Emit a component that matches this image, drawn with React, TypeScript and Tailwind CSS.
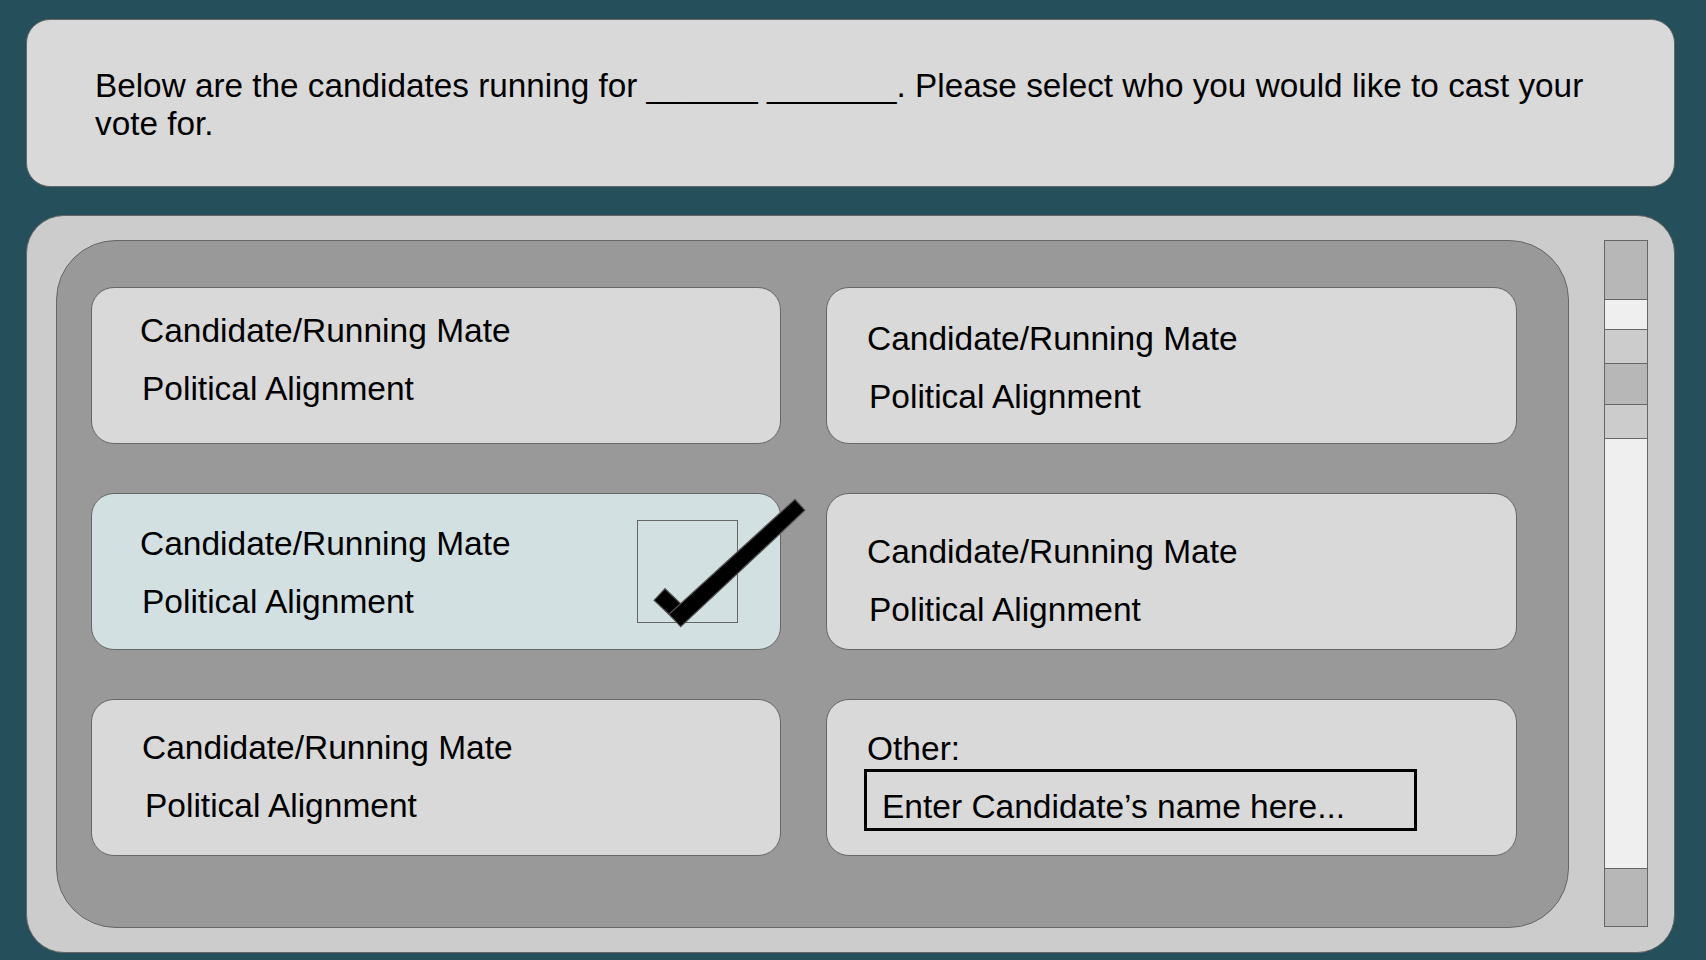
import React from 'react';

type CardProps = {
	top: number;
	left: number;
	shift: number;
	selected?: boolean;
};

const padTop: Record<number, string> = {
	14: 'pt-[14px]',
	21: 'pt-[21px]',
	22: 'pt-[22px]',
	19: 'pt-[19px]',
	29: 'pt-[29px]',
};

const padLeft: Record<number, string> = {
	40: 'pl-[40px]',
	48: 'pl-[48px]',
	50: 'pl-[50px]',
};

const shiftLeft: Record<number, string> = {
	2: 'ml-[2px]',
	3: 'ml-[3px]',
};

function Checkbox() {
	return (
		<div className="relative mr-[42px] h-[103px] w-[101px] shrink-0 border-[1.5px] border-[#666666]">
			{/* check runs past the card edge, so it sits on top */}
			<svg
				className="pointer-events-none absolute left-[-40px] top-[-30px] overflow-visible"
				width="170"
				height="150"
				viewBox="0 0 170 150"
			>
				<g transform="translate(-506.6 2.7)">
					<polygon
						points="562.6,106.6 573.6,95 592.3,112.8 581.3,124.3"
						fill="#000"
						stroke="#555"
						strokeWidth="1.2"
					/>
					<polygon
						points="703.6,5.6 713.6,16.6 589.3,133 577.6,120.6"
						fill="#000"
						stroke="#555"
						strokeWidth="1.2"
					/>
				</g>
			</svg>
		</div>
	);
}

function CandidateCard({ top, left, shift, selected }: CardProps) {
	return (
		<div
			className={`flex h-[157px] items-center justify-between rounded-[23px] border border-[#666666] ${
				selected ? 'bg-[#d3e0e2]' : 'bg-[#d9d9d9]'
			}`}
		>
			<div className={`self-start text-[33.5px] leading-[58px] ${padTop[top]} ${padLeft[left]}`}>
				<p>Candidate/Running Mate</p>
				<p className={shiftLeft[shift]}>Political Alignment</p>
			</div>
			{selected && <Checkbox />}
		</div>
	);
}

function OtherCard() {
	return (
		<div className="h-[157px] rounded-[23px] border border-[#666666] bg-[#d9d9d9] pl-[37px] pt-[30px]">
			<p className="pl-[3px] text-[33.5px] leading-[37px]">Other:</p>
			<div className="mt-[2px] h-[62px] w-[553px] border-[3px] border-black pl-[15px] pt-[16px] text-[33.5px] leading-[37px]">
				Enter Candidate’s name here...
			</div>
		</div>
	);
}

function Scrollbar() {
	return (
		<div className="flex h-full w-[44px] flex-col border border-[#666666] bg-[#efefef]">
			<div className="h-[58px] bg-[#b7b7b7]" />
			<div className="h-[30px] border-t border-[#666666] bg-[#efefef]" />
			<div className="h-[34px] border-t border-[#666666] bg-[#cccccc]" />
			<div className="h-[41px] border-t border-[#666666] bg-[#b7b7b7]" />
			<div className="h-[34px] border-t border-[#666666] bg-[#cccccc]" />
			<div className="flex-1 border-t border-[#666666] bg-[#efefef]" />
			<div className="h-[58px] border-t border-[#666666] bg-[#b7b7b7]" />
		</div>
	);
}

export default function App() {
	return (
		<div className="min-h-screen w-full bg-[#264f5c] pl-[26px] pt-[19px] font-['Liberation_Sans',Arial,sans-serif] text-black">
			<div className="h-[168px] w-[1649px] rounded-[24px] border border-[#666666] bg-[#d9d9d9] pl-[68px] pr-[50px] pt-[47px] text-[33.3px] leading-[38px]">
				Below are the candidates running for ______ _______. Please select who you would like to
				cast your vote for.
			</div>

			<div className="mt-[28px] flex h-[738px] w-[1649px] gap-[35px] rounded-[38px] border border-[#666666] bg-[#cccccc] pb-[25px] pl-[29px] pr-[26px] pt-[24px]">
				<div className="h-[688px] w-[1513px] shrink-0 rounded-[60px] border border-[#666666] bg-[#999999] pl-[34px] pt-[46px]">
					<div className="grid grid-cols-[690px_691px] gap-x-[45px] gap-y-[49px]">
						<CandidateCard top={14} left={48} shift={2} />
						<CandidateCard top={22} left={40} shift={2} />
						<CandidateCard top={21} left={48} shift={2} selected />
						<CandidateCard top={29} left={40} shift={2} />
						<CandidateCard top={19} left={50} shift={3} />
						<OtherCard />
					</div>
				</div>
				<Scrollbar />
			</div>
		</div>
	);
}
